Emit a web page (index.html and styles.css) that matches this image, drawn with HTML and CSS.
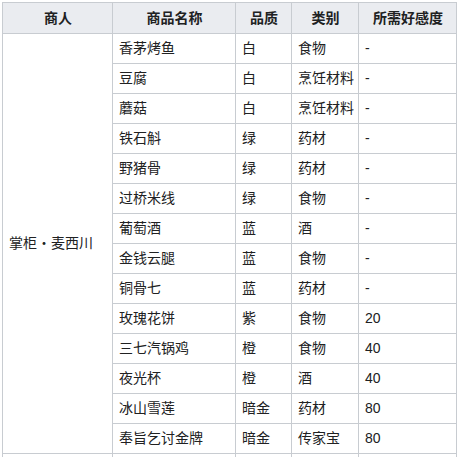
FILE: index.html
```html
<!DOCTYPE html>
<html lang="zh">
<head>
<meta charset="utf-8">
<link rel="stylesheet" href="styles.css">
</head>
<body>
<div class="page">
<table class="wikitable">
<colgroup>
<col class="c1"><col class="c2"><col class="c3"><col class="c4"><col class="c5">
</colgroup>
<thead>
<tr><th>商人</th><th>商品名称</th><th>品质</th><th>类别</th><th>所需好感度</th></tr>
</thead>
<tbody>
<tr><td rowspan="14" class="merchant">掌柜・麦西川</td><td>香茅烤鱼</td><td>白</td><td>食物</td><td>-</td></tr>
<tr><td>豆腐</td><td>白</td><td>烹饪材料</td><td>-</td></tr>
<tr><td>蘑菇</td><td>白</td><td>烹饪材料</td><td>-</td></tr>
<tr><td>铁石斛</td><td>绿</td><td>药材</td><td>-</td></tr>
<tr><td>野猪骨</td><td>绿</td><td>药材</td><td>-</td></tr>
<tr><td>过桥米线</td><td>绿</td><td>食物</td><td>-</td></tr>
<tr><td>葡萄酒</td><td>蓝</td><td>酒</td><td>-</td></tr>
<tr><td>金钱云腿</td><td>蓝</td><td>食物</td><td>-</td></tr>
<tr><td>铜骨七</td><td>蓝</td><td>药材</td><td>-</td></tr>
<tr><td>玫瑰花饼</td><td>紫</td><td>食物</td><td>20</td></tr>
<tr><td>三七汽锅鸡</td><td>橙</td><td>食物</td><td>40</td></tr>
<tr><td>夜光杯</td><td>橙</td><td>酒</td><td>40</td></tr>
<tr><td>冰山雪莲</td><td>暗金</td><td>药材</td><td>80</td></tr>
<tr><td>奉旨乞讨金牌</td><td>暗金</td><td>传家宝</td><td>80</td></tr>
<tr><td>&nbsp;</td><td>&nbsp;</td><td>&nbsp;</td><td>&nbsp;</td><td>&nbsp;</td></tr>
</tbody>
</table>
</div>
</body>
</html>
```
FILE: styles.css
```css
html, body {
  margin: 0;
  padding: 0;
  background: #ffffff;
  overflow: hidden;
}
.page {
  padding: 2px 0 0 2px;
}
.wikitable {
  border-collapse: collapse;
  table-layout: fixed;
  width: 454px;
  font-family: "Liberation Sans", "Noto Sans CJK SC", sans-serif;
  font-size: 14px;
  line-height: 22px;
  color: #202122;
  background: #ffffff;
  border: 1px solid #c8ccd1;
}
.c1 { width: 110px; }
.c2 { width: 123px; }
.c3 { width: 56px; }
.c4 { width: 67px; }
.c5 { width: 98px; }
.wikitable th,
.wikitable td {
  border: 1px solid #c8ccd1;
  padding: 3px 5px 4px 6px;
  text-align: left;
  white-space: nowrap;
  overflow: hidden;
}
.wikitable th {
  background: #eaecf0;
  font-weight: bold;
  text-align: center;
  padding: 4px 5px 4px 6px;
}
.wikitable td.merchant {
  vertical-align: middle;
}
```
